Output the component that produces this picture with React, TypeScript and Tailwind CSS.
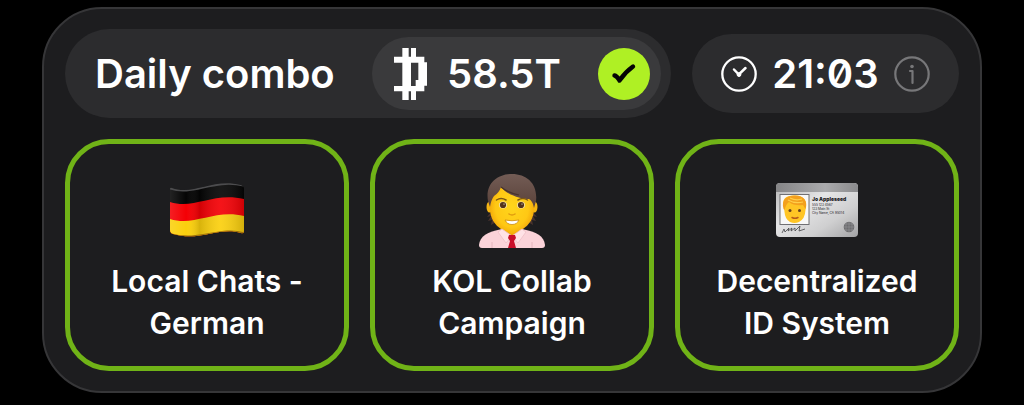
import type { ReactNode } from "react";

function TokenIcon() {
  return (
    <svg viewBox="0 0 99 156" className="h-[52px] w-[33px] shrink-0" fill="#fff" aria-hidden="true">
      <path
        fillRule="evenodd"
        d="M25 0H44V26H51V0H66V26H91V43H99V113H91V130H66V156H51V130H44V156H25V130H0V114H25V44H0V26H25ZM51 44V114H65V96H73V44Z"
      />
    </svg>
  );
}

function DoneBadge() {
  return (
    <svg viewBox="0 0 52 52" className="size-[52px] shrink-0" role="img" aria-label="Completed">
      <circle cx="26" cy="26" r="26" fill="#aff024" />
      <path
        d="M16.500 27.500C19 28 20 30 21.500 32.500C25.500 26.500 29.500 22.500 35 18.500"
        fill="none"
        stroke="#050505"
        strokeWidth="4.400"
        strokeLinecap="round"
        strokeLinejoin="round"
      />
    </svg>
  );
}

function ClockIcon() {
  return (
    <svg viewBox="0 0 36 36" className="size-9 shrink-0" fill="none" stroke="#fff" aria-hidden="true">
      <circle cx="18" cy="18" r="16.700" strokeWidth="2.300" />
      <path d="M13 13.500L17.800 18.500L24.500 12" strokeWidth="2.500" strokeLinecap="round" />
      <circle cx="18" cy="18.600" r="1.900" fill="#fff" />
    </svg>
  );
}

function InfoIcon() {
  return (
    <svg viewBox="0 0 36 36" className="size-9" fill="none" stroke="#777779" aria-hidden="true">
      <circle cx="18" cy="18" r="16.700" strokeWidth="2.200" />
      <path d="M16 15H18.500V27" strokeWidth="2.200" strokeLinecap="round" strokeLinejoin="round" />
      <circle cx="18" cy="10.500" r="1.800" fill="#777779" stroke="none" />
    </svg>
  );
}

function GermanFlag() {
  return (
    <svg viewBox="0 0 74 56" className="h-14 w-[74px]" role="img" aria-label="Flag of Germany">
      <defs>
        <clipPath id="flag-shape">
          <path d="M2 5C23 13 42-5 71 2Q74 3 74 6V48Q74 51 71 50C50 43 30 59 3 51Q0 50 0 47V6Q0 4 2 5Z" />
        </clipPath>
        <linearGradient id="flag-shade">
          <stop offset="0" stopColor="#fff" stopOpacity=".12" />
          <stop offset=".22" stopColor="#fff" stopOpacity="0" />
          <stop offset=".4" stopColor="#000" stopOpacity=".14" />
          <stop offset=".68" stopColor="#fff" stopOpacity=".08" />
          <stop offset="1" stopColor="#000" stopOpacity=".16" />
        </linearGradient>
      </defs>
      <g clipPath="url(#flag-shape)">
        <path d="M0 0H74V56H0Z" fill="#050505" />
        <path d="M0 19C24 27 42 9 74 16V56H0Z" fill="#f40005" />
        <path d="M0 36C24 44 44 26 74 33V56H0Z" fill="#fbd00d" />
        <path d="M0 0H74V56H0Z" fill="url(#flag-shade)" />
        <path d="M0 5C23 13 42-5 74 2" fill="none" stroke="#4c4c4e" strokeWidth="3" />
        <path d="M0 51C30 59 50 43 74 50" fill="none" stroke="#9b710b" strokeWidth="1.500" />
      </g>
    </svg>
  );
}

function OfficeWorker() {
  return (
    <svg viewBox="0 0 66 74" className="h-[74px] w-[66px]" role="img" aria-label="Office worker">
      <defs>
        <linearGradient id="worker-hair" x2="0" y2="1">
          <stop offset="0" stopColor="#735c55" />
          <stop offset="1" stopColor="#594139" />
        </linearGradient>
        <radialGradient id="worker-skin">
          <stop offset="0" stopColor="#ffd51c" />
          <stop offset=".75" stopColor="#ffc814" />
          <stop offset="1" stopColor="#f5ae0b" />
        </radialGradient>
      </defs>
      <path d="M12 38L8 43L12 42L9 47L13 46L12 51L17 48L18 53L22 49V38ZM54 38L58 43L54 42L57 47L53 46L54 51L49 48L48 53L44 49V38Z" fill="#49332d" />
      <path d="M3 74Q0 74 0 71C1 62 8 58 23 55H43C58 58 65 62 66 71Q66 74 63 74Z" fill="#fbd3d9" />
      <path d="M24 50H42V58L33 63L24 58Z" fill="#eda00d" />
      <ellipse cx="10.500" cy="33" rx="3" ry="5.500" fill="#f5b512" />
      <ellipse cx="55.500" cy="33" rx="3" ry="5.500" fill="#f5b512" />
      <path d="M11 21C13 10 22 6 33 6S54 11 55 22V35C55 44 50 51 44 55Q38 60 33 60T22 55C16 51 11 44 11 35Z" fill="url(#worker-skin)" />
      <path d="M11 33L9 27C6 10 18 0 33 0S59 10 57 27L55 34C54 29 53 27 50 25C42 25 28 21 22 13Q20 19 15 22Q12 26 11 33Z" fill="url(#worker-hair)" />
      <path d="M22 13Q29 19 40 21" fill="none" stroke="#49342d" strokeWidth="1.200" />
      <path d="M17.500 26Q22 23 27 26M39 26Q44 23 48.500 26" fill="none" stroke="#7d5715" strokeWidth="1.500" strokeLinecap="round" />
      <ellipse cx="24" cy="31" rx="4" ry="3.500" fill="#f5e3ad" />
      <ellipse cx="42" cy="31" rx="4" ry="3.500" fill="#f5e3ad" />
      <circle cx="24" cy="31" r="3.100" fill="#53331b" />
      <circle cx="42" cy="31" r="3.100" fill="#53331b" />
      <circle cx="25" cy="30" r=".6" fill="#fff" />
      <circle cx="43" cy="30" r=".6" fill="#fff" />
      <path d="M30 40Q33 42 36 40" fill="none" stroke="#e09a0f" strokeWidth="1.500" strokeLinecap="round" />
      <path d="M26 46Q33 47.500 40 46Q38 50.500 33 50.500T26 46Z" fill="#fff" stroke="#c98a14" strokeWidth=".8" />
      <path d="M23 55L33 62L27 69L19 58ZM43 55L33 62L39 69L47 58Z" fill="#ffe2e6" stroke="#efc0c7" strokeWidth=".8" />
      <path d="M30 61H36L37 64L35 67L37 74H29L31 67L29 64Z" fill="#c90f2a" />
      <path d="M13 68V74M53 68V74" stroke="#e5b6be" />
    </svg>
  );
}

function IdCard() {
  return (
    <svg viewBox="0 0 82 56" className="h-14 w-[82px]" role="img" aria-label="Identification card">
      <defs>
        <linearGradient id="card-metal" x2="1" y2="1">
          <stop offset="0" stopColor="#b4b4b5" />
          <stop offset=".4" stopColor="#e5e5e6" />
          <stop offset=".7" stopColor="#cfcfd0" />
          <stop offset="1" stopColor="#a3a3a5" />
        </linearGradient>
        <linearGradient id="card-strip">
          <stop offset="0" stopColor="#858587" />
          <stop offset=".6" stopColor="#aaaaac" />
          <stop offset="1" stopColor="#8b8b8d" />
        </linearGradient>
      </defs>
      <rect width="82" height="54" rx="4" fill="url(#card-metal)" />
      <path d="M0 9V4Q0 0 4 0H78Q82 0 82 4V9Z" fill="url(#card-strip)" />
      <rect x="4" y="11.500" width="29" height="30" fill="#f8f8f7" stroke="#707073" />
      <path d="M8 25C5 15 11 12 19 12.500C28 12.500 32 18 29.500 27Q29 36 23 39Q18.500 41 14 39Q9 36 8.500 29Z" fill="#ffc525" />
      <path d="M7.500 26C5 16 11 12.500 19 12.500C28 12.500 32 18 29.500 26L27 22Q18 23 13 19Q10 21 8.500 27Z" fill="#f3a01e" />
      <path d="M12 17Q19 21 27 19M14 15Q20 18 26 16" fill="none" stroke="#ffcf4a" strokeWidth="1.200" />
      <circle cx="14" cy="27.500" r="1.500" fill="#68401c" />
      <circle cx="23.500" cy="27.500" r="1.500" fill="#68401c" />
      <path d="M16 34.500Q19 36 22 34.500" fill="none" stroke="#b65b1c" strokeWidth="1.500" strokeLinecap="round" />
      <g fontFamily="Inter, sans-serif" fill="#242426">
        <text x="36" y="17.500" fontSize="5" fontWeight="900">Jo Appleseed</text>
        <g fontSize="3.200">
          <text x="36" y="22.500">555 123 4567</text>
          <text x="36" y="26.500">123 Main St</text>
          <text x="36" y="30.500">City Name, CA 95014</text>
        </g>
      </g>
      <path d="M6 50L8 46L9 49L13 45L12 48L16 45L15 48L19 45L19 48L24 43L23 48L29 46" fill="none" stroke="#454547" strokeWidth=".8" />
      <circle cx="73" cy="44" r="5.300" fill="#6c6c6e" />
      <path d="M68 44H78M69 41H77M69 47H77M73 39V49M70 40V48M76 40V48" stroke="#959597" strokeWidth=".6" />
    </svg>
  );
}

const CARDS: { lines: [string, string]; icon: ReactNode }[] = [
  { lines: ["Local Chats -", "German"], icon: <GermanFlag /> },
  { lines: ["KOL Collab", "Campaign"], icon: <OfficeWorker /> },
  { lines: ["Decentralized", "ID System"], icon: <IdCard /> },
];

function ComboCard({ lines, icon }: { lines: [string, string]; icon: ReactNode }) {
  return (
    <li className="flex flex-col items-center rounded-[44px] border-5 border-[#70b317] pt-[30px] pb-[22px]">
      <div className="flex h-[74px] items-center justify-center">{icon}</div>
      <p className="mt-3 text-center text-[30px] leading-[42px] font-semibold">
        {lines[0]}
        <br />
        {lines[1]}
      </p>
    </li>
  );
}

export default function App() {
  return (
    <main className="min-h-screen bg-black px-[42px] pt-[7px] pb-3 font-['Inter',sans-serif] text-white">
      <section className="rounded-[60px] border-2 border-[#363638] bg-[#1d1d1f] px-[21px] py-5">
        <header className="flex items-center gap-[21px]">
          <div className="flex flex-1 items-center justify-between rounded-full bg-[#2c2c2e] py-2 pr-2.5 pl-[30px]">
            <h1 className="text-[40px] leading-none font-semibold whitespace-nowrap">Daily combo</h1>
            <div className="flex w-[289px] items-center rounded-full bg-[#3a3a3c] py-2.5 pr-[11px] pl-[22px]">
              <TokenIcon />
              <span className="ml-5 text-[40px] leading-[53px] font-semibold">58.5T</span>
              <span className="ml-auto">
                <DoneBadge />
              </span>
            </div>
          </div>
          <div className="flex h-[79px] w-[267px] items-center justify-between rounded-full bg-[#2c2c2e] px-[29px]">
            <ClockIcon />
            <time className="text-[40px] leading-none font-semibold slashed-zero">21:03</time>
            <button type="button" aria-label="Combo info">
              <InfoIcon />
            </button>
          </div>
        </header>
        <ul className="mt-[21px] grid grid-cols-3 gap-[21px]">
          {CARDS.map((card) => (
            <ComboCard key={card.lines[0]} {...card} />
          ))}
        </ul>
      </section>
    </main>
  );
}
